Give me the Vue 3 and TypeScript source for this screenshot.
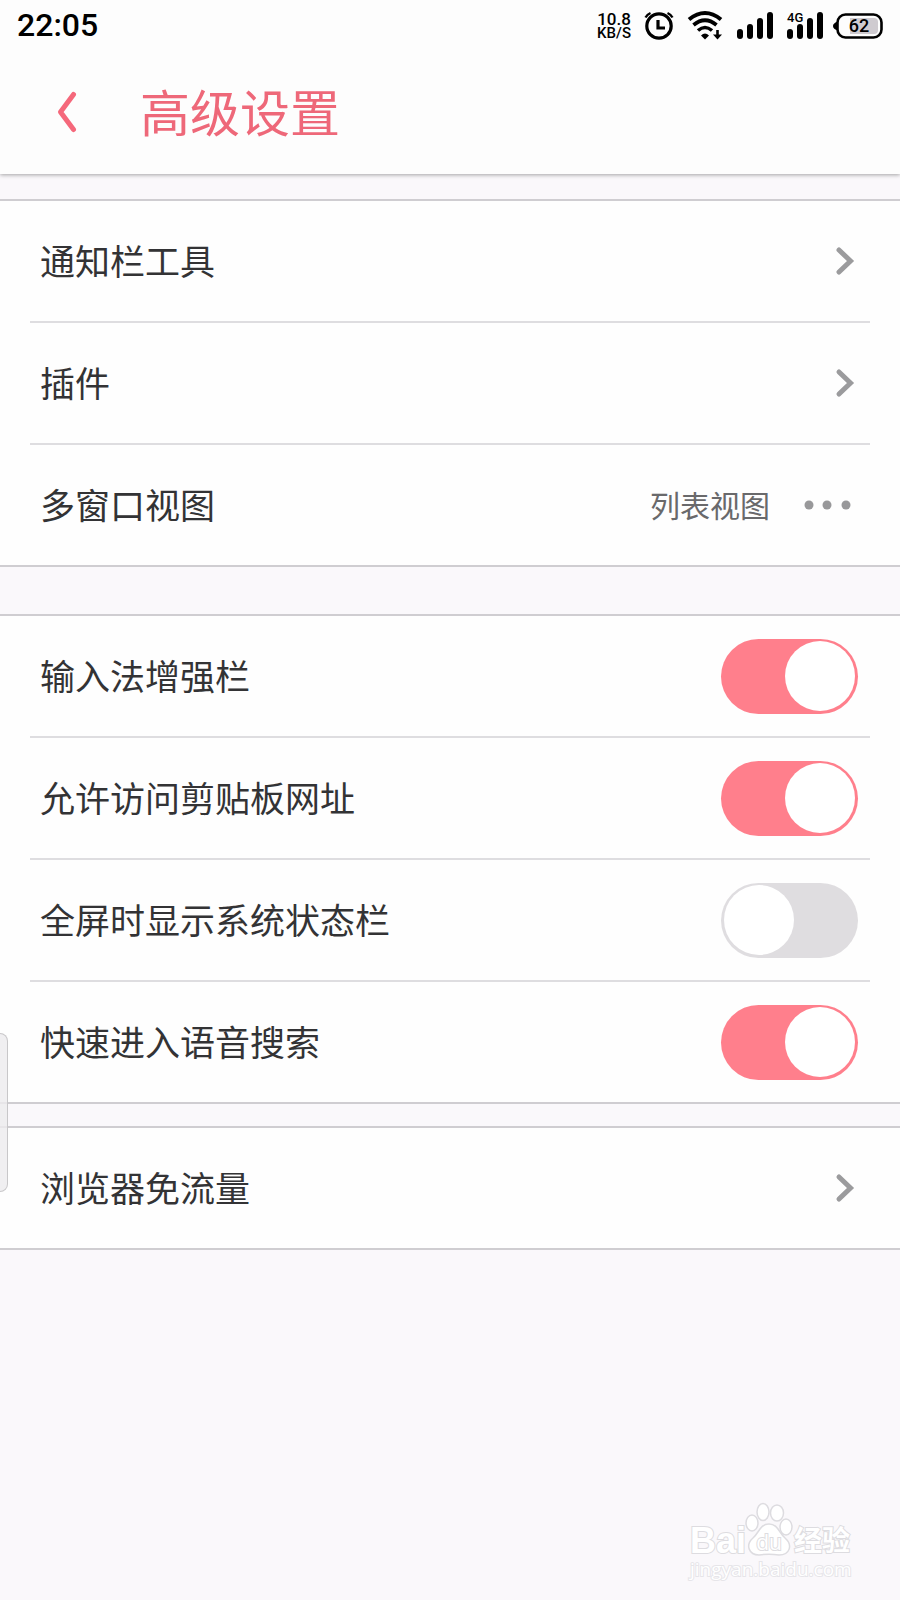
<script setup lang="ts">
import { ref } from 'vue'

interface LinkRow {
  kind: 'link'
  label: string
}
interface ChoiceRow {
  kind: 'choice'
  label: string
  value: string
}
interface SwitchRow {
  kind: 'switch'
  id: string
  label: string
  on: boolean
}
type Row = LinkRow | ChoiceRow | SwitchRow

const groups = ref<Row[][]>([
  [
    { kind: 'link', label: '通知栏工具' },
    { kind: 'link', label: '插件' },
    { kind: 'choice', label: '多窗口视图', value: '列表视图' },
  ],
  [
    { kind: 'switch', id: 'ime-bar', label: '输入法增强栏', on: true },
    { kind: 'switch', id: 'clipboard-url', label: '允许访问剪贴板网址', on: true },
    { kind: 'switch', id: 'fullscreen-status', label: '全屏时显示系统状态栏', on: false },
    { kind: 'switch', id: 'voice-search', label: '快速进入语音搜索', on: true },
  ],
  [{ kind: 'link', label: '浏览器免流量' }],
])
</script>

<template>
  <div class="page">
    <header class="top">
      <div class="status">
        <span class="time">22:05</span>
        <div class="indicators">
          <span class="speed"><span class="rate">10.8</span><span class="unit">KB/S</span></span>
          <svg width="36" height="30" viewBox="0 0 36 30" fill="none" stroke="#000" aria-hidden="true">
            <circle cx="18" cy="16" r="12.2" stroke-width="3.2" />
            <path d="M17 10v8h7" stroke-width="3.2" />
            <path d="M4.500 7.500Q6 4.500 9.500 3M31.500 7.500Q30 4.500 26.500 3" stroke-width="2.400" />
          </svg>
          <svg width="36" height="30" viewBox="0 0 36 30" fill="none" stroke="#000" aria-hidden="true">
            <path d="M2 9.500Q18 -3.500 34 9.500" stroke-width="4" />
            <path d="M6.500 15Q18 5.500 29.500 15" stroke-width="3.800" />
            <path d="M11 20.500Q18 14.500 25 20.500" stroke-width="3.600" />
            <path d="M14 25.500Q18 21.500 22 25.500L18 29.500Z" fill="#000" stroke="none" />
            <path d="M30.500 20v7" stroke-width="2.600" />
            <path d="M26 24.500h9L30.500 29.500Z" fill="#000" stroke="none" />
          </svg>
          <svg width="42" height="30" viewBox="0 0 42 30" aria-hidden="true">
            <rect x="4" y="19" width="6" height="10" rx="3" />
            <rect x="14" y="14" width="6" height="15" rx="3" />
            <rect x="24" y="8" width="6" height="21" rx="3" />
            <rect x="34" y="2" width="6" height="27" rx="3" />
          </svg>
          <svg width="38" height="30" viewBox="0 0 38 30" aria-hidden="true">
            <rect x="2" y="19" width="6" height="10" rx="3" />
            <rect x="12" y="14" width="6" height="15" rx="3" />
            <rect x="22" y="8" width="6" height="21" rx="3" />
            <rect x="32" y="2" width="6" height="27" rx="3" />
            <text class="net" x="2" y="12">4G</text>
          </svg>
          <svg width="50" height="30" viewBox="0 0 50 30" aria-hidden="true">
            <path d="M5 11.500Q0 13 0 16t5 4.500Z" />
            <rect x="4.500" y="4.500" width="44" height="23" rx="8" fill="#fdfdfd" stroke="#000" stroke-width="2.600" />
            <path d="M17 8h24q4 0 4 4v8q0 4-4 4H17Z" fill="#cfcbd0" />
            <text class="charge" x="26" y="22" text-anchor="middle">62</text>
          </svg>
        </div>
      </div>
      <div class="bar">
        <button class="back" type="button" aria-label="返回">
          <svg width="24" height="48" viewBox="0 0 24 48" fill="none" stroke="#f5687b" stroke-width="5" stroke-linecap="round" stroke-linejoin="round" aria-hidden="true">
            <path d="M18.500 6.500 5.500 24l13 17.500" />
          </svg>
        </button>
        <h1>高级设置</h1>
      </div>
    </header>

    <main>
      <section v-for="(rows, g) in groups" :key="g" class="group">
        <div v-for="row in rows" :key="row.label" class="cell">
          <label v-if="row.kind === 'switch'" class="row" :for="row.id">
            <span class="label">{{ row.label }}</span>
            <input :id="row.id" v-model="row.on" class="switch" type="checkbox" />
          </label>
          <button v-else class="row" type="button">
            <span class="label">{{ row.label }}</span>
            <span v-if="row.kind === 'choice'" class="value">{{ row.value }}</span>
            <svg v-if="row.kind === 'choice'" width="56" height="10" viewBox="0 0 56 10" fill="#98989a" aria-hidden="true">
              <circle cx="7" cy="5" r="4.500" />
              <circle cx="25" cy="5" r="4.500" />
              <circle cx="44" cy="5" r="4.500" />
            </svg>
            <svg v-else width="26" height="30" viewBox="0 0 26 30" fill="none" stroke="#9b9b9d" stroke-width="5" stroke-linecap="round" aria-hidden="true">
              <path d="M7 4 18.500 15 7 26" />
            </svg>
          </button>
        </div>
      </section>
    </main>

    <footer>
      <svg class="mark" width="176" height="88" viewBox="0 0 176 88" aria-label="Baidu 经验 jingyan.baidu.com">
        <text class="brand" x="4" y="51">Bai</text>
        <g fill="#fff" stroke="#dddce0" stroke-width="1.500">
          <ellipse cx="66" cy="21" rx="6" ry="8" />
          <ellipse cx="77" cy="10" rx="6" ry="8.500" />
          <ellipse cx="91" cy="11" rx="6.500" ry="8" />
          <ellipse cx="100" cy="25" rx="6" ry="8" />
          <path d="M83 22C74 22 73 31 67 36C59 43 63 53 73 53Q83 51.500 93 53C104 53 107 43 99 36C93 31 92 22 83 22Z" />
        </g>
        <text class="du" x="83" y="48" text-anchor="middle">du</text>
        <text class="cn" x="108" y="49">经验</text>
        <text class="site" x="4" y="74">jingyan.baidu.com</text>
      </svg>
    </footer>

    <div class="edge" aria-hidden="true"></div>
  </div>
</template>

<style>
body {
  margin: 0;
}
</style>

<style scoped>
.page {
  position: relative;
  display: flex;
  flex-direction: column;
  min-height: 100vh;
  background: #faf8fb;
  color: #333335;
  font-family: "Noto Sans CJK SC", "Noto Sans", sans-serif;
}
.top {
  background: #fdfdfd;
  box-shadow: 0 1px 4px rgba(0, 0, 0, 0.35);
}
.status {
  display: flex;
  align-items: center;
  justify-content: space-between;
  height: 50px;
  padding: 0 17px;
  color: #000;
  font-family: Roboto, sans-serif;
}
.time {
  font-size: 32px;
  font-weight: 500;
  line-height: 50px;
}
.indicators {
  display: flex;
  align-items: center;
  gap: 10px;
  height: 48px;
}
.speed {
  display: flex;
  flex-direction: column;
  align-items: center;
  padding-top: 2px;
  font-weight: 500;
}
.rate {
  font-size: 17px;
  line-height: 14px;
}
.unit {
  font-size: 15px;
  line-height: 14px;
}
.net {
  font: 500 13px Roboto, sans-serif;
}
.charge {
  font: 500 18px Roboto, sans-serif;
}
.bar {
  display: flex;
  align-items: center;
  height: 124px;
  padding-left: 55px;
}
.back {
  display: flex;
  margin: 0;
  padding: 0;
  border: 0;
  background: none;
}
h1 {
  margin: 0 0 0 61px;
  padding-bottom: 5px;
  color: #ee6879;
  font-size: 50px;
  font-weight: 400;
  line-height: 72px;
}
.group {
  margin-top: 47px;
  border-top: 2px solid #cfcdd1;
  border-bottom: 2px solid #cfcdd1;
  background: #fefefe;
}
.group:first-child {
  margin-top: 25px;
}
.group:last-child {
  margin-top: 22px;
}
.cell {
  padding: 0 30px;
}
.row {
  display: flex;
  align-items: center;
  box-sizing: border-box;
  width: 100%;
  height: 120px;
  margin: 0;
  padding: 0 12px 0 10px;
  border: 0;
  background: none;
  color: inherit;
  font-family: inherit;
  text-align: left;
}
.cell + .cell::before {
  display: block;
  height: 2px;
  background: #dedde0;
  content: "";
}
.label {
  flex: 1;
  padding-bottom: 3px;
  font-size: 35px;
  line-height: 50px;
}
.value {
  margin-right: 32px;
  padding-bottom: 3px;
  color: #69696b;
  font-size: 30px;
  line-height: 44px;
}
.switch {
  display: flex;
  align-items: center;
  flex: none;
  box-sizing: border-box;
  width: 137px;
  height: 75px;
  margin: 0;
  padding: 0 3px;
  border-radius: 38px;
  background: #dfdde0;
  appearance: none;
}
.switch::before {
  width: 70px;
  height: 70px;
  border-radius: 50%;
  background: #fff;
  content: "";
}
.switch:checked {
  justify-content: flex-end;
  background: #ff7f8c;
}
footer {
  display: flex;
  justify-content: flex-end;
  margin-top: auto;
  padding: 0 38px 10px 0;
}
.mark text {
  fill: #fff;
  stroke: #dddce0;
  stroke-width: 2px;
  paint-order: stroke;
}
.mark .brand {
  font: 700 36px "Liberation Sans", sans-serif;
}
.mark .du {
  font: 400 21px "Open Sans", sans-serif;
}
.mark .cn {
  font: 700 28px "Noto Sans CJK SC", sans-serif;
}
.mark .site {
  font: 400 19px "Open Sans", sans-serif;
  stroke: #e6e5e9;
}
.edge {
  position: absolute;
  top: 1033px;
  left: 0;
  box-sizing: border-box;
  width: 8px;
  height: 159px;
  border: 1px solid #c8c7c9;
  border-left: 0;
  border-radius: 0 8px 8px 0;
  background: rgba(236, 235, 237, 0.8);
}
</style>
